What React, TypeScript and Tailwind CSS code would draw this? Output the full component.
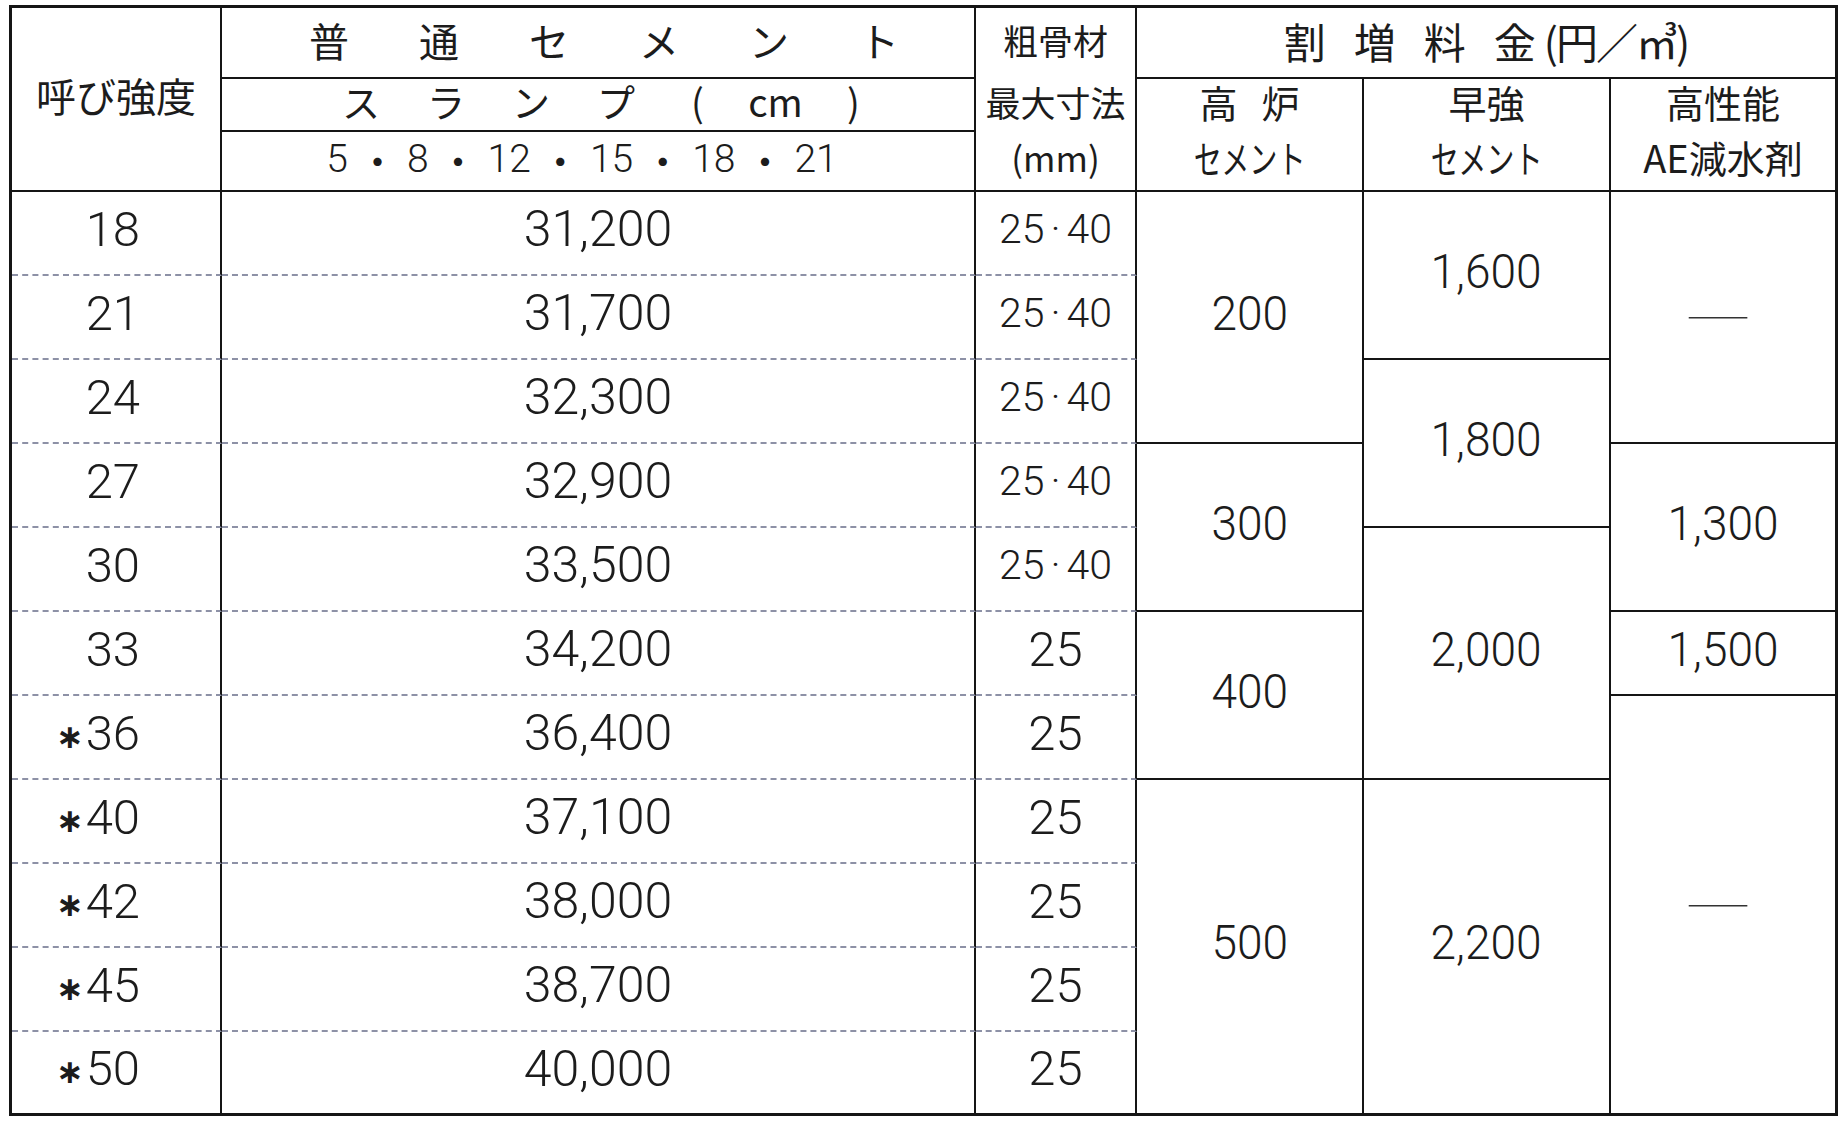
import clsx from 'clsx';

type Row = { strength: string; starred?: boolean; price: string; aggregate: string };
type MergedCell = { start: number; span: number; value: string };

const rows: Row[] = [
  { strength: '18', price: '31,200', aggregate: '25·40' },
  { strength: '21', price: '31,700', aggregate: '25·40' },
  { strength: '24', price: '32,300', aggregate: '25·40' },
  { strength: '27', price: '32,900', aggregate: '25·40' },
  { strength: '30', price: '33,500', aggregate: '25·40' },
  { strength: '33', price: '34,200', aggregate: '25' },
  { strength: '36', starred: true, price: '36,400', aggregate: '25' },
  { strength: '40', starred: true, price: '37,100', aggregate: '25' },
  { strength: '42', starred: true, price: '38,000', aggregate: '25' },
  { strength: '45', starred: true, price: '38,700', aggregate: '25' },
  { strength: '50', starred: true, price: '40,000', aggregate: '25' }
];

// 割増料金 columns: merged cells, start = data row index
const blastFurnace: MergedCell[] = [
  { start: 0, span: 3, value: '200' },
  { start: 3, span: 2, value: '300' },
  { start: 5, span: 2, value: '400' },
  { start: 7, span: 4, value: '500' }
];
const earlyStrength: MergedCell[] = [
  { start: 0, span: 2, value: '1,600' },
  { start: 2, span: 2, value: '1,800' },
  { start: 4, span: 3, value: '2,000' },
  { start: 7, span: 4, value: '2,200' }
];
const highPerformance: MergedCell[] = [
  { start: 0, span: 3, value: '—' },
  { start: 3, span: 2, value: '1,300' },
  { start: 5, span: 1, value: '1,500' },
  { start: 6, span: 5, value: '—' }
];

const surchargeColumns = [blastFurnace, earlyStrength, highPerformance];

const lastRow = rows.length - 1;

const numFont = "font-['Roboto','Noto_Sans_CJK_JP',sans-serif] font-light";

function rowBorder(index: number) {
  return index === lastRow
    ? 'border-b-[3px] border-b-[#151515]'
    : 'border-b-2 border-b-[#8d91a6] [border-bottom-style:dashed]!';
}

function SurchargeCell({ cell, column }: { cell: MergedCell; column: number }) {
  const reachesBottom = cell.start + cell.span - 1 === lastRow;
  const isDash = cell.value === '—';
  return (
    <td
      rowSpan={cell.span}
      className={clsx(
        'p-0 pb-[8px] text-center align-middle border-[#151515]',
        column === 2 ? 'border-r-[3px]' : 'border-r-2',
        reachesBottom ? 'border-b-[3px]' : 'border-b-2'
      )}
    >
      {isDash ? (
        <span className="inline-block -ml-[10px] -mt-[4px] text-[74px] leading-none font-thin text-[#333] scale-y-[0.6]">
          —
        </span>
      ) : (
        <span className={clsx('inline-block text-[49px] leading-none scale-x-[0.94]', numFont)}>
          {cell.value}
        </span>
      )}
    </td>
  );
}

export default function App() {
  return (
    <div className="min-h-screen bg-white pl-[9px] pt-[5px] text-[#1c1c1c] font-['Noto_Sans_CJK_JP','Noto_Sans',sans-serif]">
      <table className="table-fixed w-[1829px] border-separate border-spacing-0 border-l-[3px] border-t-[3px] border-[#151515]">
        <colgroup>
          <col className="w-[210px]" />
          <col className="w-[754px]" />
          <col className="w-[161px]" />
          <col className="w-[227px]" />
          <col className="w-[247px]" />
          <col className="w-[227px]" />
        </colgroup>
        <thead>
          <tr className="h-[71px]">
            <th
              rowSpan={3}
              className="p-0 font-normal text-[40px] leading-none border-r-2 border-b-2 border-[#151515] align-middle"
            >
              <div className="-mt-[8px]">呼び強度</div>
            </th>
            <th className="p-0 pb-[6px] font-normal border-r-2 border-b-2 border-[#151515]">
              <div className="flex justify-center gap-[70px] pl-[12px] text-[40px] leading-none">
                {['普', '通', 'セ', 'メ', 'ン', 'ト'].map((ch) => (
                  <span key={ch}>{ch}</span>
                ))}
              </div>
            </th>
            <th
              rowSpan={3}
              className="p-0 font-normal border-r-2 border-b-2 border-[#151515] align-top"
            >
              <div className="flex flex-col text-[35px] leading-none">
                <div className="h-[71px] pb-[8px] flex items-center justify-center">粗骨材</div>
                <div className="h-[53px] pb-[8px] flex items-center justify-center">最大寸法</div>
                <div className="h-[58px] pb-[10px] flex items-center justify-center">(mm)</div>
              </div>
            </th>
            <th
              colSpan={3}
              className="p-0 pb-[4px] font-normal border-r-[3px] border-b-2 border-[#151515]"
            >
              <div className="flex justify-center items-center text-[42px] leading-none">
                <div className="flex gap-[28px]">
                  <span>割</span>
                  <span>増</span>
                  <span>料</span>
                  <span>金</span>
                </div>
                <span className="ml-[8px] tracking-[-2px]">(円／㎥)</span>
              </div>
            </th>
          </tr>
          <tr className="h-[53px]">
            <th className="p-0 pb-[8px] font-normal border-r-2 border-b-2 border-[#151515]">
              <div className="flex justify-center pl-[15px] text-[38px] leading-none">
                {['ス', 'ラ', 'ン', 'プ'].map((ch) => (
                  <span key={ch} className="w-[85px] text-center">
                    {ch}
                  </span>
                ))}
                <span className="w-[78px] text-center">(</span>
                <span className="w-[78px] text-center">cm</span>
                <span className="w-[78px] text-center">)</span>
              </div>
            </th>
            <th
              rowSpan={2}
              className="p-0 font-normal border-r-2 border-b-2 border-[#151515] align-top"
            >
              <div className="flex flex-col text-[38px] leading-none">
                <div className="h-[53px] pb-[8px] flex items-center justify-center gap-[24px]">
                  <span>高</span>
                  <span>炉</span>
                </div>
                <div className="h-[58px] pb-[8px] flex items-center justify-center">
                  <span className="inline-block scale-x-[0.74]">セメント</span>
                </div>
              </div>
            </th>
            <th
              rowSpan={2}
              className="p-0 font-normal border-r-2 border-b-2 border-[#151515] align-top"
            >
              <div className="flex flex-col text-[38px] leading-none">
                <div className="h-[53px] pb-[8px] flex items-center justify-center">早強</div>
                <div className="h-[58px] pb-[8px] flex items-center justify-center">
                  <span className="inline-block scale-x-[0.74]">セメント</span>
                </div>
              </div>
            </th>
            <th
              rowSpan={2}
              className="p-0 font-normal border-r-[3px] border-b-2 border-[#151515] align-top"
            >
              <div className="flex flex-col text-[38px] leading-none">
                <div className="h-[53px] pb-[8px] flex items-center justify-center">高性能</div>
                <div className="h-[58px] pb-[8px] flex items-center justify-center">AE減水剤</div>
              </div>
            </th>
          </tr>
          <tr className="h-[60px]">
            <th className="p-0 pb-[3px] font-normal border-r-2 border-b-2 border-[#151515]">
              <div className="flex justify-center items-center gap-[10px] pr-[32px] text-[39px] leading-none">
                {['5', '・', '8', '・', '12', '・', '15', '・', '18', '・', '21'].map((t, i) =>
                  t === '・' ? (
                    <span key={i}>{t}</span>
                  ) : (
                    <span key={i} className={numFont}>
                      {t}
                    </span>
                  )
                )}
              </div>
            </th>
          </tr>
        </thead>
        <tbody>
          {rows.map((row, index) => (
            <tr key={row.strength} className="h-[84px]">
              <td
                className={clsx(
                  'p-0 pb-[8px] pr-[80px] text-right border-r-2 border-r-[#151515] text-[49px] leading-none',
                  numFont,
                  rowBorder(index)
                )}
              >
                {row.starred && (
                  <span className="inline-block mr-[2px] text-[33px] font-bold align-[2px] font-['DejaVu_Sans',sans-serif]">
                    ∗
                  </span>
                )}
                {row.strength}
              </td>
              <td
                className={clsx(
                  'p-0 pb-[8px] text-center border-r-2 border-r-[#151515] text-[50px] leading-none',
                  numFont,
                  rowBorder(index)
                )}
              >
                {row.price}
              </td>
              <td
                className={clsx(
                  'p-0 pb-[8px] text-center border-r-2 border-r-[#151515] leading-none',
                  numFont,
                  rowBorder(index)
                )}
              >
                {row.aggregate === '25' ? (
                  <span className="text-[49px]">25</span>
                ) : (
                  <span className="text-[41px]">
                    25<span className="mx-[6px]">·</span>40
                  </span>
                )}
              </td>
              {surchargeColumns.map((column, c) => {
                const cell = column.find((m) => m.start === index);
                return cell ? <SurchargeCell key={c} cell={cell} column={c} /> : null;
              })}
            </tr>
          ))}
        </tbody>
      </table>
    </div>
  );
}
